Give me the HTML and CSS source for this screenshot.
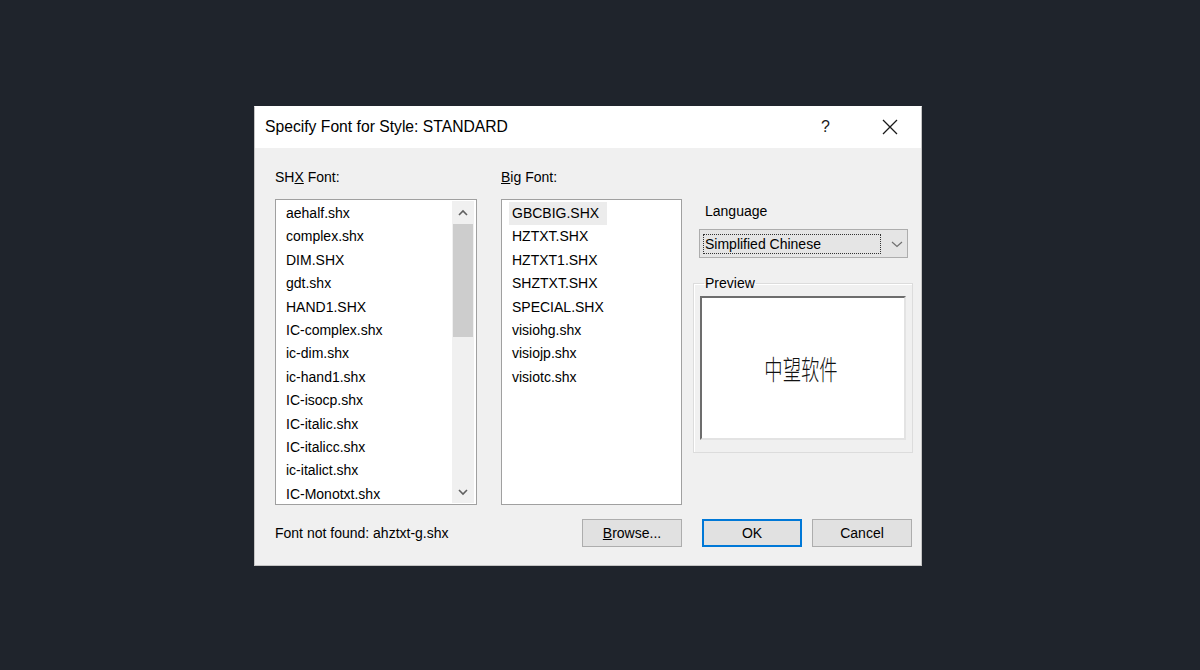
FILE: index.html
```html
<!DOCTYPE html>
<html lang="en">
<head>
<meta charset="utf-8">
<title>Specify Font for Style</title>
<link rel="stylesheet" href="styles.css">
</head>
<body>
<div class="dialog">
  <div class="titlebar">
    <span class="title">Specify Font for Style: STANDARD</span>
    <span class="help">?</span>
    <svg class="close" width="16" height="16" viewBox="0 0 16 16"><path d="M1 1 L15 15 M15 1 L1 15" stroke="#1a1a1a" stroke-width="1.3" fill="none"/></svg>
  </div>
  <div class="content">
    <div class="columns">
      <div class="col col-shx">
        <div class="label">SH<u>X</u> Font:</div>
        <div class="listbox">
          <ul class="items">
            <li>aehalf.shx</li>
            <li>complex.shx</li>
            <li>DIM.SHX</li>
            <li>gdt.shx</li>
            <li>HAND1.SHX</li>
            <li>IC-complex.shx</li>
            <li>ic-dim.shx</li>
            <li>ic-hand1.shx</li>
            <li>IC-isocp.shx</li>
            <li>IC-italic.shx</li>
            <li>IC-italicc.shx</li>
            <li>ic-italict.shx</li>
            <li>IC-Monotxt.shx</li>
          </ul>
          <div class="scrollbar">
            <svg class="arrow" width="10" height="8" viewBox="0 0 10 8"><path d="M1 6 L5 2 L9 6" stroke="#606060" stroke-width="1.6" fill="none"/></svg>
            <div class="track"><div class="thumb"></div></div>
            <svg class="arrow" width="10" height="8" viewBox="0 0 10 8"><path d="M1 2 L5 6 L9 2" stroke="#606060" stroke-width="1.6" fill="none"/></svg>
          </div>
        </div>
      </div>
      <div class="col col-big">
        <div class="label"><u>B</u>ig Font:</div>
        <div class="listbox big">
          <ul class="items">
            <li><span class="sel">GBCBIG.SHX</span></li>
            <li>HZTXT.SHX</li>
            <li>HZTXT1.SHX</li>
            <li>SHZTXT.SHX</li>
            <li>SPECIAL.SHX</li>
            <li>visiohg.shx</li>
            <li>visiojp.shx</li>
            <li>visiotc.shx</li>
          </ul>
        </div>
      </div>
      <div class="col col-side">
        <div class="lang-label">Language</div>
        <div class="combo">
          <span class="combo-text">Simplified Chinese</span>
          <svg class="combo-arrow" width="12" height="8" viewBox="0 0 12 8"><path d="M1 2 L6 6.5 L11 2" stroke="#707070" stroke-width="1.2" fill="none"/></svg>
        </div>
        <fieldset class="group">
          <legend>Preview</legend>
          <div class="preview"><span class="cjk">中望软件</span></div>
        </fieldset>
      </div>
    </div>
    <div class="footer">
      <span class="status">Font not found: ahztxt-g.shx</span>
      <button class="btn browse"><u>B</u>rowse...</button>
      <button class="btn ok">OK</button>
      <button class="btn cancel">Cancel</button>
    </div>
  </div>
</div>
</body>
</html>
```
FILE: styles.css
```css
html, body {
  margin: 0;
  padding: 0;
}
body {
  background: #1f242c;
  width: 1200px;
  height: 670px;
  overflow: hidden;
  font-family: "Liberation Sans", Arial, sans-serif;
  color: #000;
}
.dialog {
  position: relative;
  margin: 106px 0 0 254px;
  width: 668px;
  height: 460px;
  box-sizing: border-box;
  border: 1px solid #c4c4c4;
  border-top-color: #ffffff;
  background: #f0f0f0;
  display: flex;
  flex-direction: column;
}
.titlebar {
  height: 41px;
  background: #ffffff;
  display: flex;
  align-items: center;
  padding-left: 10px;
  font-size: 15.7px;
  padding-bottom: 2px;
  box-sizing: border-box;
}
.title {
  flex: 1;
  color: #000;
}
.help {
  font-size: 16px;
  width: 14px;
  margin-right: 47px;
  color: #1a1a1a;
}
.close {
  margin-right: 23px;
}
.content {
  flex: 1;
  padding: 20px 8px 0 20px;
  display: flex;
  flex-direction: column;
}
.columns {
  display: flex;
  height: 337px;
}
.col {
  flex-shrink: 0;
}
.col-shx {
  width: 202px;
}
.col-big {
  width: 181px;
  margin-left: 24px;
}
.col-side {
  width: 220px;
  margin-left: 11px;
}
.label {
  font-size: 14px;
  line-height: 18px;
  height: 18px;
  margin-bottom: 13px;
  color: #000;
}
.listbox {
  height: 306px;
  box-sizing: border-box;
  border: 1px solid #a0a0a0;
  background: #fff;
  display: flex;
}
.items {
  list-style: none;
  margin: 0;
  padding: 2px 0 0 0;
  flex: 1;
  font-size: 14px;
}
.items li {
  height: 23.4px;
  line-height: 23.4px;
  padding-left: 10px;
  white-space: nowrap;
}
.sel {
  display: inline-block;
  background: #ececec;
  margin-left: -3px;
  padding: 0 8px 0 3px;
}
.scrollbar {
  width: 22px;
  margin: 1px 2px 1px 0;
  background: #f0f0f0;
  display: flex;
  flex-direction: column;
  align-items: center;
}
.arrow {
  margin: 8px 0 7px;
}
.track {
  flex: 1;
  width: 100%;
}
.thumb {
  height: 113px;
  background: #cdcdcd;
  margin: 0 1px;
}
.lang-label {
  font-size: 14px;
  line-height: 18px;
  padding-left: 12px;
  margin-top: 34px;
}
.combo {
  margin: 9px 0 0 6px;
  width: 209px;
  height: 29px;
  box-sizing: border-box;
  border: 1px solid #adadad;
  background: #e5e5e5;
  display: flex;
  align-items: center;
  padding: 0 3px;
}
.combo-text {
  width: 178px;
  height: 20px;
  box-sizing: border-box;
  border: 1px dotted #333;
  font-size: 14px;
  line-height: 18px;
  padding-left: 1px;
}
.combo-arrow {
  margin-left: 10px;
}
.group {
  margin: 17px 0 0 0;
  padding: 5px 6px 12px 6px;
  border: 1px solid #dcdcdc;
  box-shadow: inset 1px 1px 0 #fff;
  box-sizing: border-box;
  min-width: 0;
}
.group legend {
  font-size: 14px;
  line-height: 16px;
  padding: 0 1px;
  margin-left: 4px;
}
.preview {
  height: 144px;
  box-sizing: border-box;
  background: #fff;
  border-top: 2px solid #6d6d6d;
  border-left: 2px solid #6d6d6d;
  border-right: 2px solid #e3e3e3;
  border-bottom: 2px solid #e3e3e3;
  display: flex;
  align-items: center;
  justify-content: center;
  padding-right: 4px;
}
.cjk {
  font-family: "Noto Sans CJK SC", "Noto Sans CJK JP", sans-serif;
  font-size: 27px;
  font-weight: 300;
  display: inline-block;
  transform: scaleX(0.68);
  color: #111;
}
.footer {
  margin-top: 14px;
  margin-right: 1px;
  display: flex;
  align-items: center;
  height: 28px;
}
.status {
  flex: 1;
  font-size: 14px;
}
.btn {
  font-family: "Liberation Sans", Arial, sans-serif;
  font-size: 14px;
  width: 100px;
  height: 28px;
  box-sizing: border-box;
  background: #e1e1e1;
  border: 1px solid #adadad;
  color: #000;
  padding: 0;
  margin: 0;
}
.browse {
  margin-right: 20px;
}
.ok {
  border: 2px solid #0078d7;
  margin-right: 10px;
}
.cancel {
  margin-right: 0;
}
```
